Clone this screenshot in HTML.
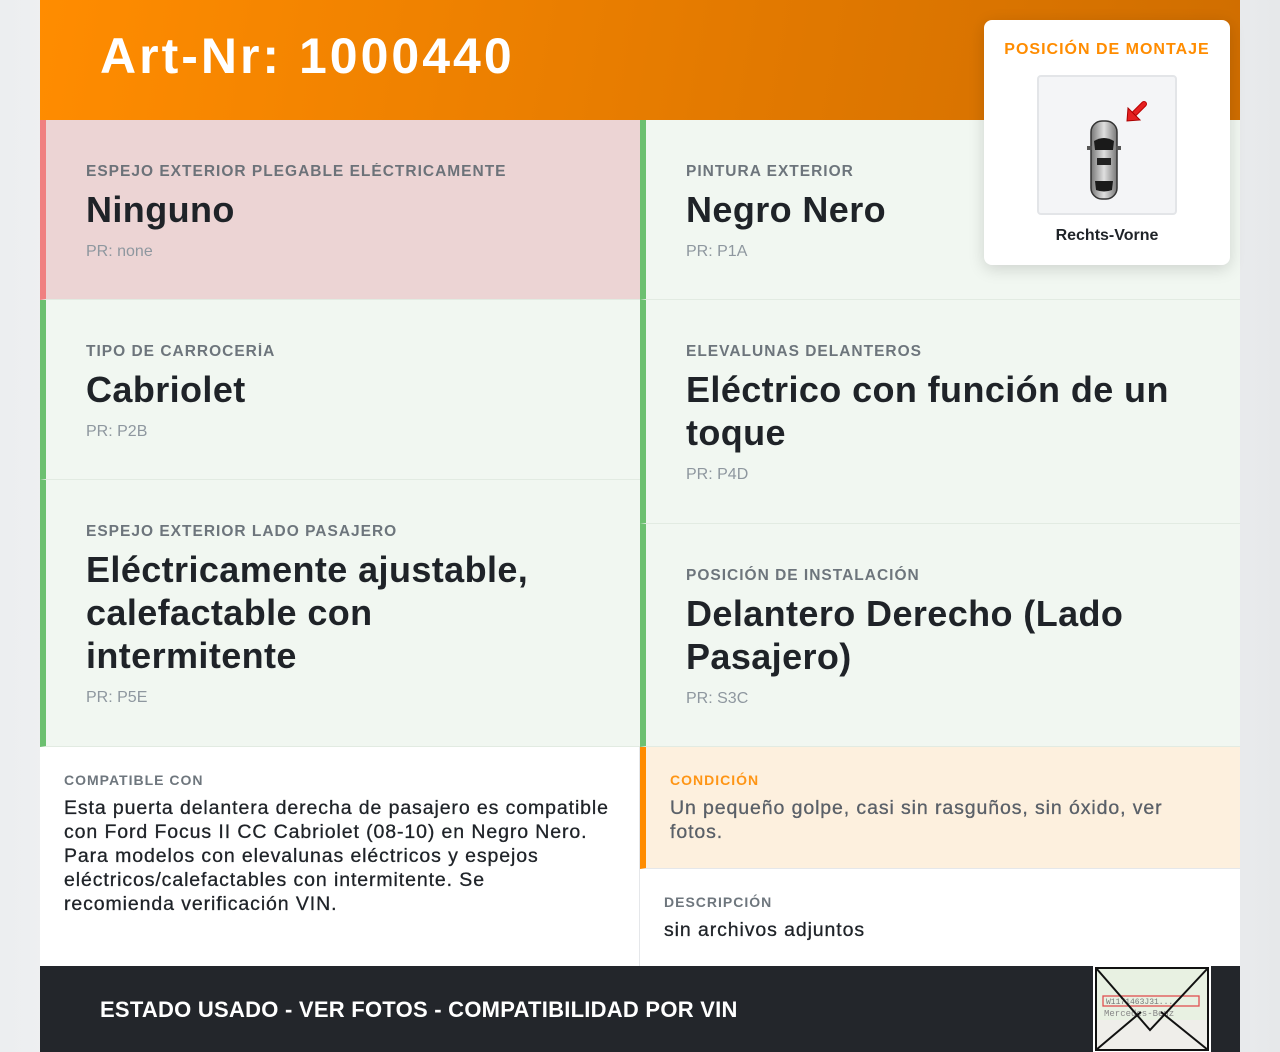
<!DOCTYPE html>
<html><head><meta charset="utf-8"><style>
*{box-sizing:border-box;margin:0;padding:0}
body{width:1280px;height:1052px;background:linear-gradient(90deg,#eceef0,#f6f7f8 20%,#f6f7f8 80%,#e6e8ea);font-family:"Liberation Sans",Arial,sans-serif;position:relative;overflow:hidden}
.wrap{position:absolute;left:40px;top:0;width:1200px;height:1052px;background:#fff}
.hdr{position:absolute;left:0;top:0;width:1200px;height:120px;background:linear-gradient(100deg,#ff8c00,#e27900 60%,#d06e00)}
.hdr h1{position:absolute;left:60px;top:27px;color:#fff;font-size:50px;font-weight:bold;letter-spacing:3px}
.cell{position:absolute;background:#f1f7f1;border-left:6px solid #6cc070;border-bottom:1px solid #e2ebe2;padding-left:40px;padding-top:43px}
.lab{font-size:15.5px;letter-spacing:1px;color:#5f6870;font-weight:bold;text-transform:uppercase;opacity:.9}
.val{font-size:36px;font-weight:bold;color:#1f2328;line-height:43px;margin-top:7px;letter-spacing:.4px}
.pr{font-size:16px;color:#8e979f;margin-top:12px}
.txt{font-size:19.5px;line-height:24px;margin-top:8px;letter-spacing:.9px;-webkit-text-stroke:.3px currentColor}
.card{position:absolute;left:944px;top:20px;width:246px;height:245px;background:#fff;border-radius:8px;box-shadow:0 4px 16px rgba(0,0,0,.15);text-align:center}
</style></head><body>
<div class="wrap">
<div class="hdr"><h1>Art-Nr: 1000440</h1></div>

<div class="cell" style="left:0;top:120px;width:600px;height:180px;background:#ecd4d4;border-left-color:#f08080"><div class="lab">Espejo exterior plegable eléctricamente</div><div class="val">Ninguno</div><div class="pr">PR: none</div></div>
<div class="cell" style="left:0;top:300px;width:600px;height:180px"><div class="lab">Tipo de carrocería</div><div class="val">Cabriolet</div><div class="pr">PR: P2B</div></div>
<div class="cell" style="left:0;top:480px;width:600px;height:267px"><div class="lab">Espejo exterior lado pasajero</div><div class="val">Eléctricamente ajustable,<br>calefactable con<br>intermitente</div><div class="pr">PR: P5E</div></div>

<div class="cell" style="left:600px;top:120px;width:600px;height:180px"><div class="lab">Pintura exterior</div><div class="val">Negro Nero</div><div class="pr">PR: P1A</div></div>
<div class="cell" style="left:600px;top:300px;width:600px;height:224px"><div class="lab">Elevalunas delanteros</div><div class="val">Eléctrico con función de un<br>toque</div><div class="pr">PR: P4D</div></div>
<div class="cell" style="left:600px;top:524px;width:600px;height:223px"><div class="lab">Posición de instalación</div><div class="val">Delantero Derecho (Lado<br>Pasajero)</div><div class="pr">PR: S3C</div></div>

<div style="position:absolute;left:0;top:747px;width:600px;height:219px;padding:25px 26px 25px 24px;border-right:1px solid #e5e7ea">
<div class="lab" style="font-size:14px">Compatible con</div>
<div class="txt" style="color:#1f2328">Esta puerta delantera derecha de pasajero es compatible con Ford Focus II CC Cabriolet (08-10) en Negro Nero. Para modelos con elevalunas eléctricos y espejos eléctricos/calefactables con intermitente. Se<br>recomienda verificación VIN.</div></div>

<div style="position:absolute;left:600px;top:747px;width:600px;height:122px;background:#fdf0de;border-left:6px solid #ff8c00;border-bottom:1px solid #e5e7ea;padding:25px 24px">
<div class="lab" style="font-size:14px;color:#ff8c00">Condición</div>
<div class="txt" style="color:#5a6068">Un pequeño golpe, casi sin rasguños, sin óxido, ver fotos.</div></div>

<div style="position:absolute;left:600px;top:869px;width:600px;height:97px;padding:25px 24px">
<div class="lab" style="font-size:14px">Descripción</div>
<div class="txt" style="color:#1f2328">sin archivos adjuntos</div></div>

<div style="position:absolute;left:0;top:966px;width:1200px;height:86px;background:#23262b">
<div style="position:absolute;left:60px;top:31px;color:#fff;font-size:22px;font-weight:bold;letter-spacing:.25px">ESTADO USADO - VER FOTOS - COMPATIBILIDAD POR VIN</div>
<svg style="position:absolute;left:1053px;top:0" width="118" height="86" viewBox="0 0 118 86">
<rect x="0" y="0" width="118" height="86" fill="#fff"/>
<rect x="3" y="2" width="112" height="52" fill="#e8f1e2"/>
<rect x="3" y="54" width="112" height="30" fill="#efeeea"/>
<rect x="10" y="30" width="96" height="10" fill="none" stroke="#e05050" stroke-width="1.3"/>
<text x="13" y="38" font-size="8" font-family="Liberation Mono" fill="#777">W1171463J31...</text>
<text x="11" y="50" font-size="9" font-family="Liberation Mono" fill="#888">Mercedes-Benz</text>
<path d="M3 2 L57 64 L115 2" fill="none" stroke="#111" stroke-width="2"/>
<path d="M3 84 L48 46 M115 84 L68 46" stroke="#111" stroke-width="2"/>
<rect x="3" y="2" width="112" height="82" fill="none" stroke="#111" stroke-width="2"/>
</svg>
</div>

<div class="card">
<div style="margin-top:21px;color:#ff8c00;font-weight:bold;font-size:16px;letter-spacing:1px">POSICIÓN DE MONTAJE</div>
<div style="position:absolute;left:53px;top:55px;width:140px;height:140px;background:#f4f5f7;border:2px solid #e3e5e8;border-radius:4px">
<svg width="136" height="136" viewBox="0 0 136 136">
<defs><linearGradient id="g" x1="0" x2="1"><stop offset="0" stop-color="#777"/><stop offset=".5" stop-color="#e0e0e0"/><stop offset="1" stop-color="#777"/></linearGradient></defs>
<rect x="52" y="44" width="26" height="78" rx="11" fill="url(#g)" stroke="#333" stroke-width="1.5"/>
<rect x="48" y="69" width="5" height="4" fill="#555"/><rect x="77" y="69" width="5" height="4" fill="#555"/>
<path d="M55 64 Q65 58 75 64 L74 73 L56 73Z" fill="#1a1a1a"/>
<rect x="58" y="81" width="14" height="7" fill="#222"/>
<path d="M56 104 L74 104 L73 113 Q65 116 57 113Z" fill="#1a1a1a"/>
<path d="M92 40 L105 27" stroke="#b00" stroke-width="6" stroke-linecap="round"/>
<path d="M92 40 L105 27" stroke="#e52020" stroke-width="4" stroke-linecap="round"/>
<path d="M88 44 L89 31 L101 43Z" fill="#e52020" stroke="#a00" stroke-width="1"/>
</svg></div>
<div style="position:absolute;left:0;width:246px;top:207px;font-size:16px;font-weight:bold;color:#1f2328">Rechts-Vorne</div>
</div>
</div>
</body></html>
